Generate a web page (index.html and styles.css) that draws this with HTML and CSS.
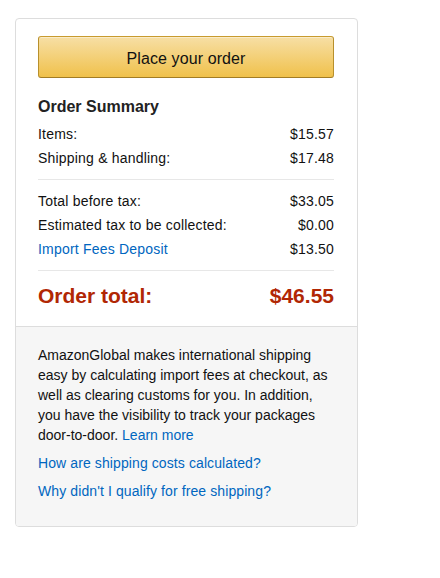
FILE: index.html
```html
<!DOCTYPE html>
<html>
<head>
<meta charset="utf-8">
<link rel="stylesheet" href="styles.css">
</head>
<body>
<div class="box">
  <div class="main">
    <button class="btn">Place your order</button>
    <h3 class="title">Order Summary</h3>
    <div class="row"><span>Items:</span><span>$15.57</span></div>
    <div class="row"><span>Shipping &amp; handling:</span><span>$17.48</span></div>
    <hr class="sep">
    <div class="row"><span>Total before tax:</span><span>$33.05</span></div>
    <div class="row"><span>Estimated tax to be collected:</span><span>$0.00</span></div>
    <div class="row"><a class="link" href="#">Import Fees Deposit</a><span>$13.50</span></div>
    <hr class="sep">
    <div class="total"><span>Order total:</span><span>$46.55</span></div>
  </div>
  <div class="info">
    <p class="para">AmazonGlobal makes international shipping easy by calculating import fees at checkout, as well as clearing customs for you. In addition, you have the visibility to track your packages door-to-door. <a class="link" href="#">Learn more</a></p>
    <p class="linkline"><a class="link" href="#">How are shipping costs calculated?</a></p>
    <p class="linkline"><a class="link" href="#">Why didn't I qualify for free shipping?</a></p>
  </div>
</div>
</body>
</html>
```

FILE: styles.css
```css
html, body {
  margin: 0;
  padding: 0;
  background: #fff;
}
body {
  padding: 18px 0 0 15px;
  font-family: "Liberation Sans", Arial, sans-serif;
  font-size: 14px;
  letter-spacing: 0.2px;
  color: #111;
}
.box {
  box-sizing: border-box;
  width: 343px;
  border: 1px solid #ddd;
  border-radius: 4px;
  overflow: hidden;
}
.main {
  padding: 17px 23px 15px 22px;
}
.btn {
  display: block;
  box-sizing: border-box;
  width: 296px;
  height: 42px;
  margin: 0;
  padding: 4px 0 0;
  border: 1px solid;
  border-color: #c89b2f #b8902c #a27c24;
  border-radius: 3px;
  background: linear-gradient(to bottom, #f7dfa5, #f0c14b);
  box-shadow: inset 0 1px 0 rgba(255,255,255,.4);
  font-family: "Liberation Sans", Arial, sans-serif;
  font-size: 16px;
  letter-spacing: 0.1px;
  color: #111;
  line-height: 36px;
  text-align: center;
}
.title {
  margin: 18px 0 4px;
  font-size: 16px;
  line-height: 22px;
  font-weight: bold;
  letter-spacing: 0;
  color: #222;
}
.row {
  display: flex;
  justify-content: space-between;
  line-height: 24px;
  height: 24px;
}
.sep {
  margin: 9px 0;
  border: 0;
  border-top: 1px solid #e7e7e7;
  height: 0;
}
.link {
  color: #0066c0;
  text-decoration: none;
}
.total {
  display: flex;
  justify-content: space-between;
  margin-top: 10px;
  font-size: 21px;
  line-height: 30px;
  font-weight: bold;
  letter-spacing: 0;
  color: #b12704;
}
.info {
  background: #f6f6f6;
  border-top: 1px solid #ddd;
  padding: 18px 22px 25px 22px;
}
.para {
  margin: 0;
  line-height: 20px;
  letter-spacing: 0;
}
.linkline {
  margin: 8px 0 0;
  line-height: 20px;
  letter-spacing: 0.1px;
}
```
